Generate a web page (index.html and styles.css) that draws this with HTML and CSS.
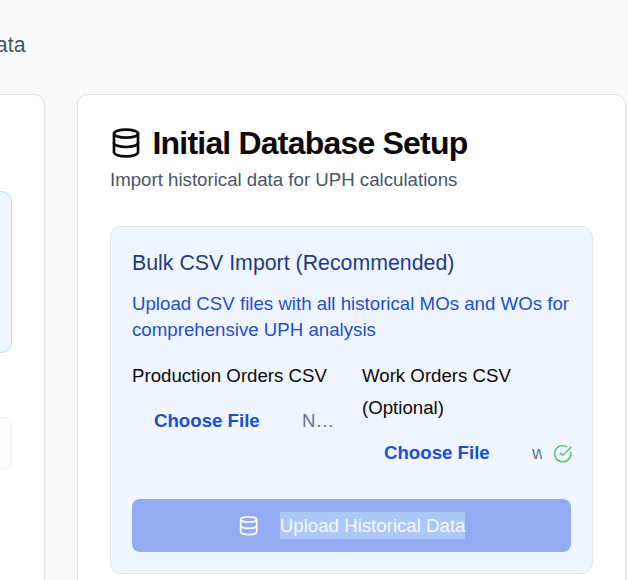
FILE: index.html
```html
<!DOCTYPE html>
<html lang="en">
<head>
<meta charset="utf-8">
<title>Initial Database Setup</title>
<link rel="stylesheet" href="styles.css">
</head>
<body>
<svg class="defs" aria-hidden="true">
  <symbol id="database" viewBox="0 0 24 24">
    <ellipse cx="12" cy="5" rx="9" ry="3"/>
    <path d="M3 5V19A9 3 0 0 0 21 19V5"/>
    <path d="M3 12A9 3 0 0 0 21 12"/>
  </symbol>
</svg>
<main class="page">
  <header class="page-head"><p class="page-sub">ata</p></header>
  <div class="columns">
    <section class="card card-side">
      <div class="notice"></div>
      <div class="status"></div>
    </section>
    <section class="card card-main">
      <h2 class="title"><svg class="icon icon-lg"><use href="#database"/></svg><span>Initial Database Setup</span></h2>
      <p class="desc">Import historical data for UPH calculations</p>
      <div class="panel">
        <h3 class="panel-title">Bulk CSV Import (Recommended)</h3>
        <p class="panel-text"><span>Upload CSV files with all historical MOs and WOs for</span> <span>comprehensive UPH analysis</span></p>
        <div class="fields">
          <div class="field">
            <label class="label">Production Orders CSV</label>
            <div class="file"><span class="choose">Choose File</span><span class="name">N…</span></div>
          </div>
          <div class="field">
            <label class="label">Work Orders CSV<br>(Optional)</label>
            <div class="file"><span class="choose">Choose File</span><span class="name name-cut">w</span>
              <svg class="icon check" viewBox="0 0 24 24"><path d="M21.801 10A10 10 0 1 1 17 3.335"/><path d="m9 11 3 3L22 4"/></svg>
            </div>
          </div>
        </div>
        <button class="upload"><svg class="icon icon-sm"><use href="#database"/></svg><span class="marked">Upload Historical Data</span></button>
      </div>
    </section>
  </div>
</main>
</body>
</html>
```
FILE: styles.css
```css
* { box-sizing: border-box; margin: 0; }
html, body { width: 628px; height: 580px; overflow: hidden; }
body {
  background: #f8fafc;
  color: #0c0a09;
  font-family: "Liberation Sans", Arial, sans-serif;
  font-size: 18.67px;
}
.defs { position: absolute; width: 0; height: 0; }
.page { height: 580px; overflow: hidden; }
.page-head { height: 94px; padding-top: 29px; }
.page-sub {
  width: 25.5px;
  display: flex;
  justify-content: flex-end;
  font-size: 21.33px;
  line-height: 32px;
  color: #475569;
}
.columns { display: grid; grid-template-columns: 45px 549px; column-gap: 32px; }
.card {
  height: 560px;
  background: #fff;
  border: 1px solid #e7e5e4;
  border-radius: 11px;
  box-shadow: 0 1px 3px rgba(0, 0, 0, .06);
}
.card-side { border-left: 0; border-radius: 0 11px 11px 0; padding: 96px 32px 0 0; }
.notice {
  height: 162px;
  background: #eff6ff;
  border: 1px solid #bfdbfe;
  border-left: 0;
  border-radius: 0 11px 11px 0;
}
.status {
  height: 53px;
  margin-top: 64px;
  background: #fbfefd;
  border: 1px solid #f1f1f0;
  border-left: 0;
  border-radius: 0 8px 8px 0;
}
.card-main { padding: 32px; }
.title {
  display: flex;
  align-items: center;
  gap: 10.5px;
  height: 32px;
  font-size: 32px;
  line-height: 32px;
  font-weight: 700;
  letter-spacing: -.8px;
  white-space: nowrap;
}
.icon { fill: none; stroke: currentColor; stroke-width: 2; stroke-linecap: round; stroke-linejoin: round; flex: none; }
.icon-lg { width: 32px; height: 32px; }
.icon-sm { width: 21.33px; height: 21.33px; }
.desc { margin-top: 8px; line-height: 26.67px; color: #475569; white-space: nowrap; }
.panel {
  height: 348px;
  margin-top: 32.3px;
  padding: 20px 21px 21px;
  background: #eff6ff;
  border: 1px solid #e7e5e4;
  border-radius: 11px;
}
.panel-title { font-size: 21.33px; line-height: 32px; font-weight: 400; color: #1e3a8a; white-space: nowrap; }
.panel-text { margin-top: 12px; line-height: 26px; color: #1d4ed8; }
.panel-text span { display: block; white-space: nowrap; letter-spacing: .01px; }
.fields {
  display: grid;
  grid-template-columns: minmax(0, 1fr) minmax(0, 1fr);
  column-gap: 21px;
  height: 132px;
  margin-top: 17px;
}
.label { display: block; line-height: 32px; white-space: nowrap; }
.file { display: flex; align-items: center; height: 53px; margin-top: 2.5px; padding-left: 22px; white-space: nowrap; }
.choose { width: 148px; flex: none; font-weight: 700; color: #1d4ed8; }
.name { color: #64748b; }
.name-cut { width: 10px; flex: none; overflow: hidden; }
.check { width: 19.5px; height: 19.5px; margin: 1px 0 0 10.5px; stroke-width: 1.7; color: #4fbe63; }
.upload {
  display: flex;
  align-items: center;
  justify-content: center;
  gap: 21px;
  width: 100%;
  height: 53px;
  margin-top: 7px;
  border: 0;
  border-radius: 8px;
  background: #93abf1;
  color: #f5f9ff;
  font: inherit;
}
.marked { background: #acc8f7; line-height: 27px; white-space: nowrap; }
```
